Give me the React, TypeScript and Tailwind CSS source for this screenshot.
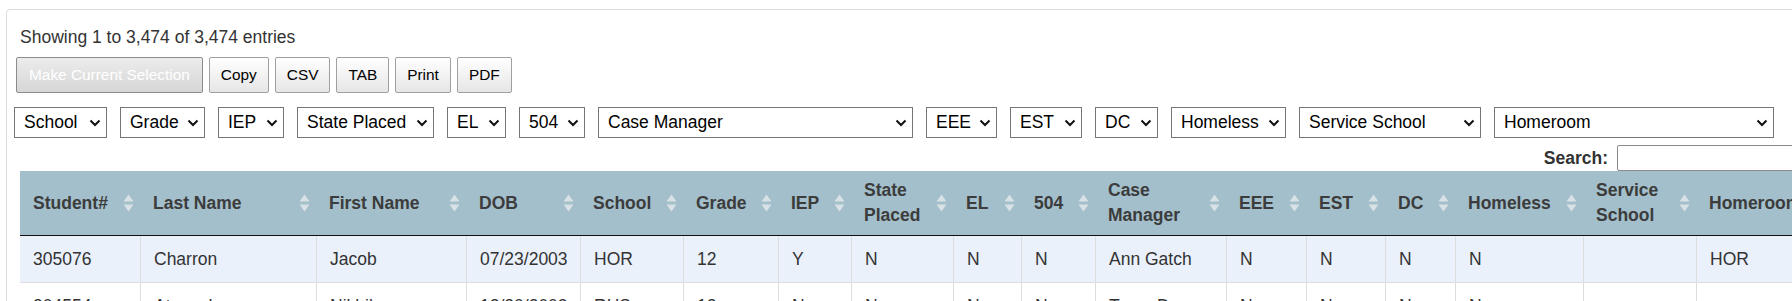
import React from 'react';

const filters = [
  { label: 'School', w: 'w-[93px]' },
  { label: 'Grade', w: 'w-[85px]' },
  { label: 'IEP', w: 'w-[66px]' },
  { label: 'State Placed', w: 'w-[137px]' },
  { label: 'EL', w: 'w-[59px]' },
  { label: '504', w: 'w-[66px]' },
  { label: 'Case Manager', w: 'w-[315px]' },
  { label: 'EEE', w: 'w-[71px]' },
  { label: 'EST', w: 'w-[72px]' },
  { label: 'DC', w: 'w-[63px]' },
  { label: 'Homeless', w: 'w-[115px]' },
  { label: 'Service School', w: 'w-[182px]' },
  { label: 'Homeroom', w: 'w-[280px]' },
];

const columns = [
  { label: 'Student#', w: 'w-[120px]' },
  { label: 'Last Name', w: 'w-[176px]' },
  { label: 'First Name', w: 'w-[150px]' },
  { label: 'DOB', w: 'w-[114px]' },
  { label: 'School', w: 'w-[103px]' },
  { label: 'Grade', w: 'w-[95px]' },
  { label: 'IEP', w: 'w-[73px]' },
  { label: 'State Placed', w: 'w-[102px]' },
  { label: 'EL', w: 'w-[68px]' },
  { label: '504', w: 'w-[74px]' },
  { label: 'Case Manager', w: 'w-[131px]' },
  { label: 'EEE', w: 'w-[80px]' },
  { label: 'EST', w: 'w-[79px]' },
  { label: 'DC', w: 'w-[70px]' },
  { label: 'Homeless', w: 'w-[128px]' },
  { label: 'Service School', w: 'w-[113px]' },
  { label: 'Homeroom', w: 'w-[140px]' },
];

const rows = [
  ['305076', 'Charron', 'Jacob', '07/23/2003', 'HOR', '12', 'Y', 'N', 'N', 'N', 'Ann Gatch', 'N', 'N', 'N', 'N', '', 'HOR'],
  ['304554', 'Atwood', 'Nikhil', '12/20/2003', 'RHS', '12', 'N', 'N', 'N', 'N', 'Tracy Dunn', 'N', 'N', 'N', 'N', '', ''],
];

function Chevron() {
  return (
    <svg width="12" height="8" viewBox="0 0 12 8" className="shrink-0">
      <path d="M1.5 1.5 6 6l4.5-4.5" fill="none" stroke="#111" strokeWidth="2" />
    </svg>
  );
}

function SortIcon() {
  return (
    <svg width="11" height="18" viewBox="0 0 11 18" className="shrink-0">
      <polygon points="5.5,0.5 10.5,7.5 0.5,7.5" fill="#d8e2e6" />
      <polygon points="0.5,10.5 10.5,10.5 5.5,17.5" fill="#d8e2e6" />
    </svg>
  );
}

function Btn({ children, muted }: { children: React.ReactNode; muted?: boolean }) {
  return (
    <button
      className={
        muted
          ? 'h-[36px] rounded-[2px] border border-[#8c8c8c] bg-gradient-to-b from-[#ececec] to-[#d6d6d6] px-[12px] text-[15.4px] text-white'
          : 'h-[36px] rounded-[2px] border border-[#a0a0a0] bg-gradient-to-b from-white to-[#e6e6e6] px-[11px] text-[15.4px] text-black'
      }
    >
      {children}
    </button>
  );
}

export default function App() {
  return (
    <div className="h-[301px] w-[1792px] overflow-hidden bg-white pt-[9px] font-['Liberation_Sans',Arial,sans-serif] text-[#333]">
      <div className="ml-[6px] w-[1900px] rounded-tl-[4px] border border-[#dcdcdc] pt-[15px]">
        <div className="ml-[13px] text-[17.5px] leading-[25px]">Showing 1 to 3,474 of 3,474 entries</div>

        <div className="ml-[9px] mt-[7px] flex gap-[6px]">
          <Btn muted>Make Current Selection</Btn>
          <Btn>Copy</Btn>
          <Btn>CSV</Btn>
          <Btn>TAB</Btn>
          <Btn>Print</Btn>
          <Btn>PDF</Btn>
        </div>

        <div className="ml-[7px] mt-[14px] flex gap-[13px]">
          {filters.map((f) => (
            <div
              key={f.label}
              className={`${f.w} flex h-[31px] items-center justify-between border border-[#767676] pl-[9px] pr-[5px] text-[17.5px] text-black`}
            >
              <span className="whitespace-nowrap">{f.label}</span>
              <Chevron />
            </div>
          ))}
        </div>

        <div className="ml-[13px] w-[1847px]">
          <div className="mt-[7px] flex items-center justify-end gap-[9px]">
            <label className="text-[17.5px] font-bold leading-[25px]">Search:</label>
            <input className="h-[26px] w-[250px] rounded-[2px] border border-[#8a8a8a]" />
          </div>

          <table className="table-fixed border-separate border-spacing-0 text-[17.5px]">
            <thead>
              <tr className="bg-[#a3bfcb]">
                {columns.map((c) => (
                  <th
                    key={c.label}
                    className={`${c.w} border-b border-[#111] py-[7px] pl-[13px] pr-[6px] text-left align-middle font-bold leading-[25px] text-[#3c3c3c]`}
                  >
                    <div className="flex items-center justify-between gap-[4px]">
                      <span>{c.label}</span>
                      <SortIcon />
                    </div>
                  </th>
                ))}
              </tr>
            </thead>
            <tbody>
              {rows.map((r, i) => (
                <tr key={i} className={i === 0 ? 'bg-[#eaf1fb]' : 'bg-white'}>
                  {r.map((v, j) => (
                    <td
                      key={j}
                      className={`${j > 0 ? 'border-l' : ''} whitespace-nowrap border-b border-[#dddddd] py-[10px] pl-[13px] leading-[26px]`}
                    >
                      {v}
                    </td>
                  ))}
                </tr>
              ))}
            </tbody>
          </table>
        </div>
      </div>
    </div>
  );
}
